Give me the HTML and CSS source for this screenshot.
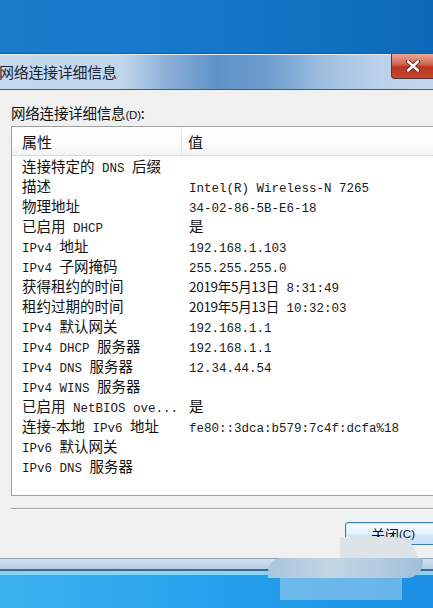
FILE: index.html
```html
<!DOCTYPE html>
<html lang="zh-CN">
<head>
    <meta charset="UTF-8">
    <title>网络连接详细信息</title>
    <link rel="stylesheet" href="styles.css">
</head>
<body>
<div class="screen">
    <div class="desk"></div>
    <div class="win">
        <div class="caption">
            <span class="caption-text">网络连接详细信息</span>
            <span class="close">
                <svg width="18" height="12" viewBox="0 0 18 12">
                    <path d="M4 1.5 L14 10.5 M14 1.5 L4 10.5" stroke="#5a1a10" stroke-width="4.2" stroke-linecap="round"/>
                    <path d="M4 1.5 L14 10.5 M14 1.5 L4 10.5" stroke="#fff" stroke-width="2.6" stroke-linecap="round"/>
                </svg>
            </span>
        </div>
        <div class="client">
            <div class="label">网络连接详细信息<span class="key">(D)</span>:</div>
            <div class="list">
                <div class="head">
                    <span class="col1">属性</span>
                    <span class="col2">值</span>
                </div>
                <div class="rows">
                    <div class="row"><span class="col1">连接特定的<span class="en"> DNS </span>后缀</span><span class="col2"></span></div>
                    <div class="row"><span class="col1">描述</span><span class="col2 en">Intel(R) Wireless-N 7265</span></div>
                    <div class="row"><span class="col1">物理地址</span><span class="col2 en">34-02-86-5B-E6-18</span></div>
                    <div class="row"><span class="col1">已启用<span class="en"> DHCP</span></span><span class="col2">是</span></div>
                    <div class="row"><span class="col1"><span class="en">IPv4 </span>地址</span><span class="col2 en">192.168.1.103</span></div>
                    <div class="row"><span class="col1"><span class="en">IPv4 </span>子网掩码</span><span class="col2 en">255.255.255.0</span></div>
                    <div class="row"><span class="col1">获得租约的时间</span><span class="col2"><span class="date">2019年5月13日</span><span class="en"> 8:31:49</span></span></div>
                    <div class="row"><span class="col1">租约过期的时间</span><span class="col2"><span class="date">2019年5月13日</span><span class="en"> 10:32:03</span></span></div>
                    <div class="row"><span class="col1"><span class="en">IPv4 </span>默认网关</span><span class="col2 en">192.168.1.1</span></div>
                    <div class="row"><span class="col1"><span class="en">IPv4 DHCP </span>服务器</span><span class="col2 en">192.168.1.1</span></div>
                    <div class="row"><span class="col1"><span class="en">IPv4 DNS </span>服务器</span><span class="col2 en">12.34.44.54</span></div>
                    <div class="row"><span class="col1"><span class="en">IPv4 WINS </span>服务器</span><span class="col2"></span></div>
                    <div class="row"><span class="col1">已启用<span class="en"> NetBIOS ove...</span></span><span class="col2">是</span></div>
                    <div class="row"><span class="col1">连接-本地<span class="en"> IPv6 </span>地址</span><span class="col2 en">fe80::3dca:b579:7c4f:dcfa%18</span></div>
                    <div class="row"><span class="col1"><span class="en">IPv6 </span>默认网关</span><span class="col2"></span></div>
                    <div class="row"><span class="col1"><span class="en">IPv6 DNS </span>服务器</span><span class="col2"></span></div>
                </div>
            </div>
            <div class="sep"></div>
            <div class="buttons">
                <span class="btn">关闭<span class="key">(C)</span></span>
            </div>
        </div>
        <div class="frame-bottom"></div>
    </div>
    <div class="desk-bottom"></div>
    <div class="mark mark-top"></div>
    <div class="mark mark-mid"></div>
    <div class="mark mark-low"></div>
</div>
</body>
</html>
```

FILE: styles.css
```css
* {
    margin: 0;
    padding: 0;
    box-sizing: border-box;
}

body {
    width: 433px;
    height: 608px;
    overflow: hidden;
    background: #f0f0f0;
    font-family: "Noto Sans CJK SC", "Noto Sans", sans-serif;
    color: #111;
}

.screen {
    position: relative;
    width: 433px;
    height: 608px;
    overflow: hidden;
}

.desk {
    height: 53px;
    background: linear-gradient(90deg, #1a7ccb 0%, #1477c8 50%, #0d69b8 100%);
}

/* 标题栏 */
.caption {
    height: 37px;
    display: flex;
    align-items: center;
    justify-content: space-between;
    border-top: 1px solid #2f5478;
    border-bottom: 1px solid #3f5f80;
    box-shadow: inset 0 1px 0 #e6f0fa;
    background: linear-gradient(90deg, #c6d9ee 0%, #c2d7ec 28%, #8eb1d8 38%, #5f93c8 50%, #6d9dce 62%, #9fbfe0 75%, #bcd2ea 88%, #c4d8ed 100%);
}

.caption-text {
    margin-left: -1px;
    font-size: 15px;
    color: #1a2533;
    letter-spacing: -0.3px;
}

.close {
    align-self: flex-start;
    width: 42px;
    height: 25px;
    display: flex;
    align-items: center;
    justify-content: center;
    border: 1px solid #4a3a40;
    border-top: none;
    border-right: none;
    border-radius: 0 0 0 4px;
    background: linear-gradient(180deg, #e8a79a 0%, #d46a55 40%, #b8361f 55%, #c9452c 100%);
}

/* 窗口内容 */
.client {
    height: 468px;
    padding-top: 13px;
    background: #f0f0f0;
}

.label {
    margin-left: 11px;
    font-size: 14.5px;
    line-height: 20px;
    letter-spacing: -0.2px;
}

.key {
    font-family: "Liberation Sans", sans-serif;
    font-size: 11.5px;
}

.list {
    margin: 1px -10px 0 11px;
    height: 370px;
    border: 1px solid #a0a0a0;
    border-right: none;
    background: #fff;
}

.head {
    display: flex;
    height: 29px;
    align-items: center;
    border-bottom: 1px solid #d8d8d8;
    background: linear-gradient(180deg, #ffffff 0%, #fdfdfd 60%, #f2f3f5 100%);
    font-size: 15px;
}

.head .col1 {
    height: 100%;
    display: flex;
    align-items: center;
    border-right: 1px solid #e3e5e8;
}

.col1 {
    width: 170px;
    padding-left: 10px;
    flex-shrink: 0;
}

.col2 {
    padding-left: 6px;
}

.rows {
    padding-top: 0;
}

.row {
    display: flex;
    align-items: baseline;
    height: 20px;
    line-height: 20px;
    font-size: 14.5px;
    white-space: pre;
}

.row .col2 {
    padding-left: 7px;
}

.en {
    font-family: "Liberation Mono", "DejaVu Sans Mono", monospace;
    font-size: 12.5px;
    color: #1a1a1a;
}

.date {
    font-size: 13.5px;
    letter-spacing: -0.3px;
}

.sep {
    margin: 12px -10px 0 11px;
    height: 2px;
    border-top: 1px solid #a0a0a0;
    border-bottom: 1px solid #fff;
}

.buttons {
    display: flex;
    justify-content: flex-end;
    margin-top: 12px;
    margin-right: -8px;
}

.btn {
    width: 96px;
    height: 23px;
    display: flex;
    align-items: center;
    justify-content: center;
    border: 1px solid #3c7fb1;
    border-radius: 3px;
    box-shadow: inset 0 0 0 1px #c9e9f9;
    background: linear-gradient(180deg, #f4fafe 0%, #e6f3fc 50%, #d5eaf9 51%, #c4e2f7 100%);
    font-size: 14px;
}

/* 窗口下边框 */
.frame-bottom {
    height: 13px;
    border-top: 1px solid #8a9cb0;
    border-bottom: 2px solid #44668a;
    background: linear-gradient(180deg, #d4e2f0 0%, #b7cee6 100%);
}

.desk-bottom {
    height: 40px;
    border-top: 4px solid #86d5f6;
    background: linear-gradient(90deg, #3cb3f0 0%, #27a2ec 45%, #1b8fe2 100%);
}

/* 水印 */
.mark {
    position: absolute;
}

.mark-top {
    left: 340px;
    top: 537px;
    width: 78px;
    height: 24px;
    border-radius: 0 30px 0 0;
    background: #dde3e7;
}

.mark-mid {
    left: 268px;
    top: 558px;
    width: 155px;
    height: 20px;
    border-radius: 14px 0 16px 0;
    background: linear-gradient(90deg, #a7c6dd 0%, #c3d5e1 40%, #b4cde0 70%, #9ebfd9 100%);
}

.mark-low {
    left: 280px;
    top: 578px;
    width: 122px;
    height: 22px;
    background: rgba(200, 225, 242, 0.45);
}
```
